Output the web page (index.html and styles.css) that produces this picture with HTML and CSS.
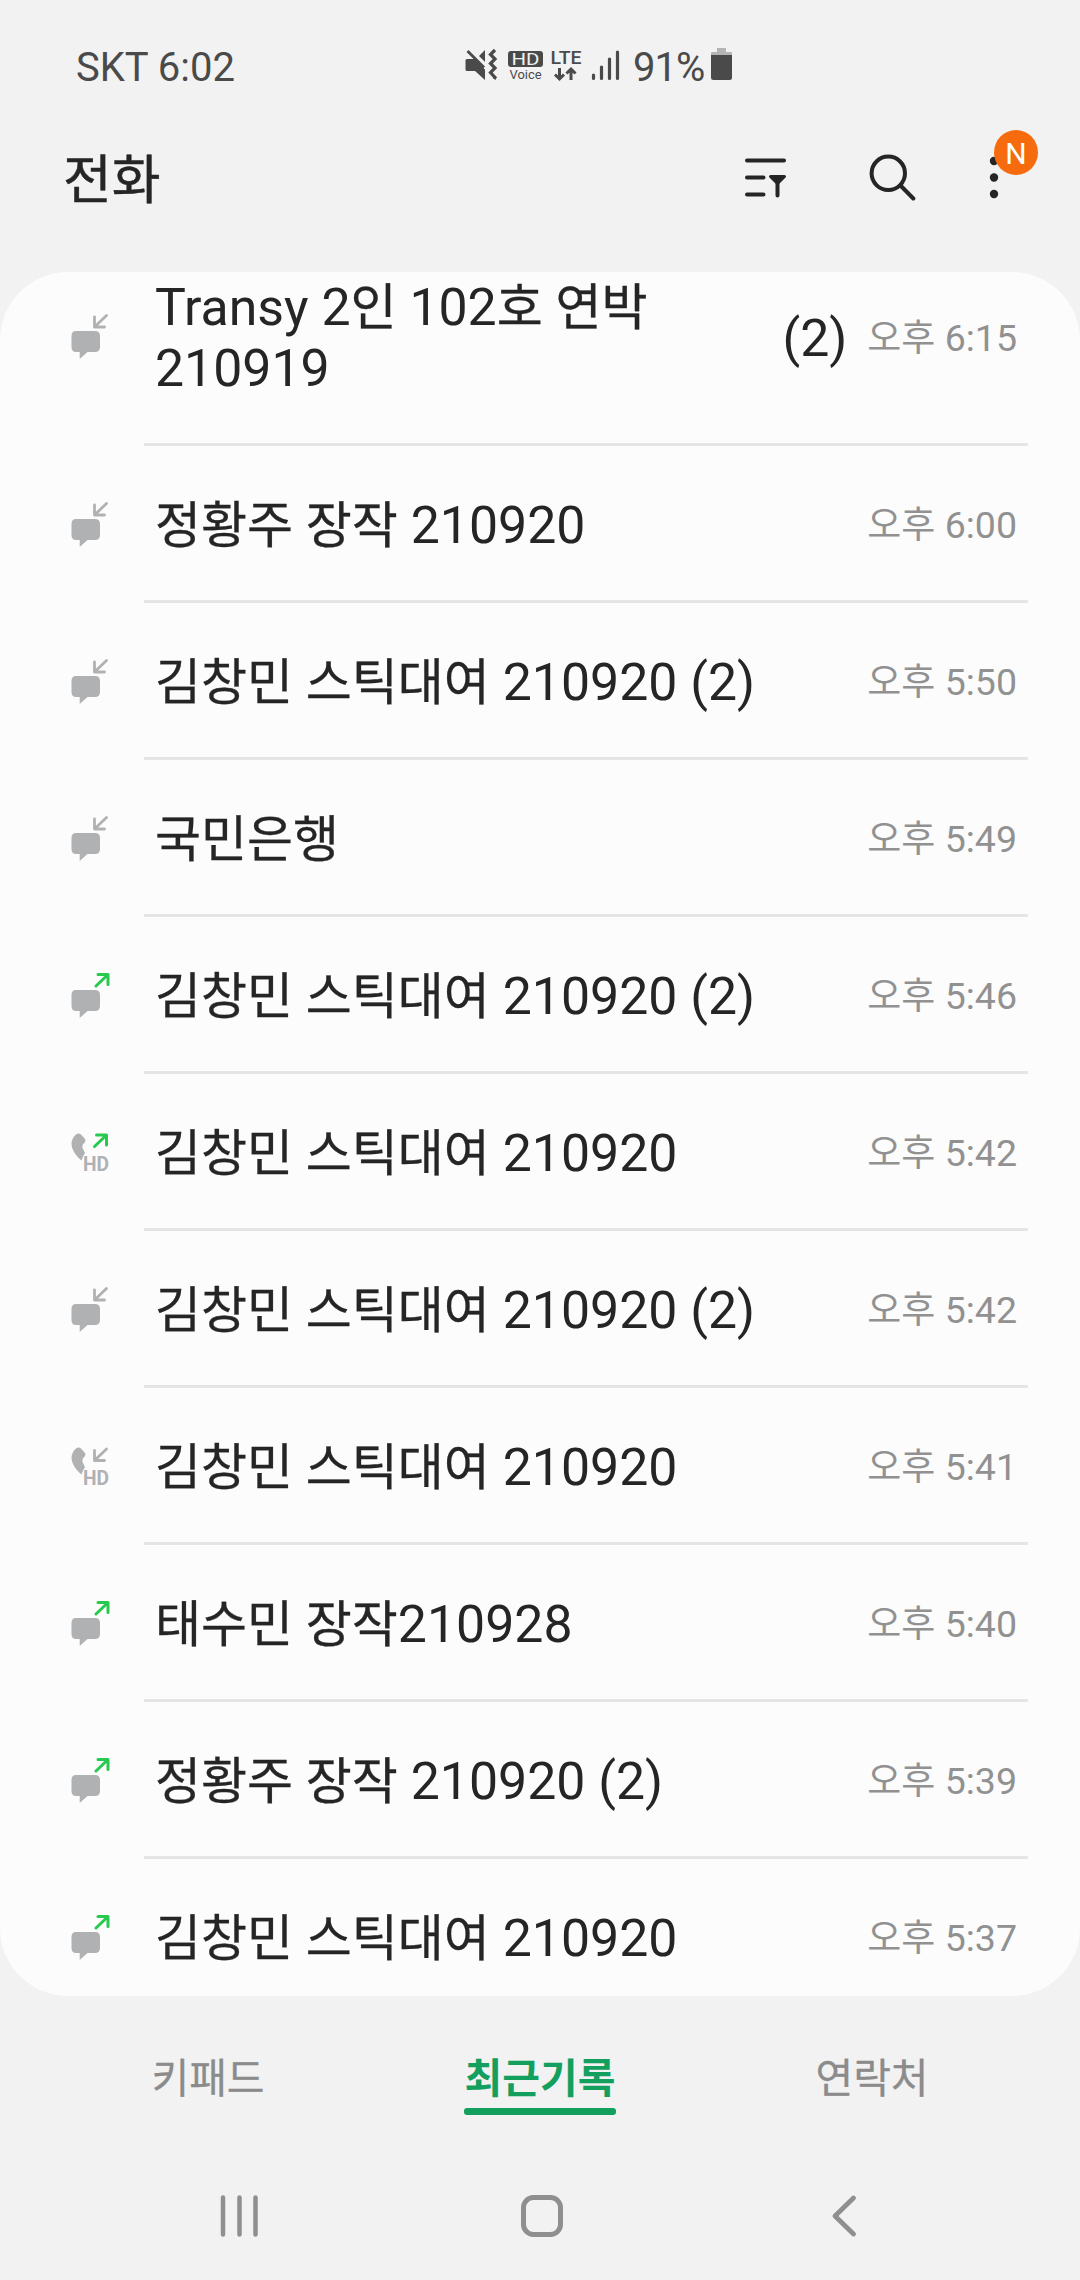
FILE: index.html
```html
<!DOCTYPE html>
<html lang="ko">
<head>
  <meta charset="UTF-8">
  <meta name="viewport" content="width=device-width, initial-scale=1.0">
  <title>전화</title>
  <link rel="stylesheet" href="styles.css">
</head>
<body>

  <svg class="sprite" width="0" height="0">
    <symbol id="arrow-in" viewBox="0 0 16 16">
      <path d="M14 2L2.500 13M2 3.500V13.500H12" fill="none" stroke="#afb1b3" stroke-width="2.800" stroke-linecap="round" stroke-linejoin="round"/>
    </symbol>
    <symbol id="arrow-out" viewBox="0 0 16 16">
      <path d="M2 13.500L13.500 2.500M4 2H14V12" fill="none" stroke="#27c94f" stroke-width="3" stroke-linecap="round" stroke-linejoin="round"/>
    </symbol>
    <symbol id="bubble" viewBox="0 0 30 30">
      <path d="M5 .5H24Q29 .5 29 5.500V16.500Q29 21.500 24 21.500H16.500L8.700 28.500V21.500H5Q.5 21.500 .5 16.500V5.500Q.5 .5 5 .5Z" fill="#afb1b3"/>
    </symbol>
    <symbol id="msg-in" viewBox="0 0 46 48">
      <use href="#bubble" x="3" y="17.500" width="30" height="30"/>
      <use href="#arrow-in" x="24.500" y="0.500" width="16" height="16"/>
    </symbol>
    <symbol id="msg-out" viewBox="0 0 46 48">
      <use href="#bubble" x="3" y="17.500" width="30" height="30"/>
      <use href="#arrow-out" x="26" y="0.500" width="16" height="16"/>
    </symbol>
    <symbol id="handset" viewBox="0 0 46 48">
      <path d="M8 5.500Q10.500 3.500 13 5.500L17 10Q18 11.500 17 13L14.500 16V19L17 24L15 27.500L13.500 31.500C7 26 3.500 20 3.500 14.500Q4 8.500 8 5.500Z" fill="#afb1b3"/>
      <text x="15" y="42" textLength="26" lengthAdjust="spacingAndGlyphs" class="hd-label">HD</text>
    </symbol>
    <symbol id="call-in" viewBox="0 0 46 48">
      <use href="#handset" width="46" height="48"/>
      <use href="#arrow-in" x="24.500" y="4" width="16" height="16"/>
    </symbol>
    <symbol id="call-out" viewBox="0 0 46 48">
      <use href="#handset" width="46" height="48"/>
      <use href="#arrow-out" x="24.500" y="4" width="16" height="16"/>
    </symbol>
  </svg>

  <div class="status-bar">
    <span class="carrier">SKT 6:02</span>
    <svg class="status-icons" width="158" height="36" viewBox="0 0 158 36">
      <!-- mute + vibrate -->
      <path d="M2 12H9.500L20 22.500V33L10 24H2Q.5 24 .5 22.500V13.500Q.5 12 2 12Z" fill="#4a4a4a"/>
      <path d="M20 3V15L14 9Z" fill="#4a4a4a"/>
      <path d="M2.500 4L19 20.500" stroke="#4a4a4a" stroke-width="2.800"/>
      <path d="M30 3L25.500 7.500L30 12L25.500 16.500L30 21L25.500 25.500L30 30.500L29 32" fill="none" stroke="#4a4a4a" stroke-width="3.200"/>
      <!-- HD voice -->
      <rect x="43" y="4" width="35" height="16" rx="3" fill="#4a4a4a"/>
      <text x="60.500" y="17.500" class="hd-badge" textLength="28" lengthAdjust="spacingAndGlyphs">HD</text>
      <text x="60.500" y="32" class="hd-voice" textLength="32" lengthAdjust="spacingAndGlyphs">Voice</text>
      <!-- LTE -->
      <text x="101" y="16.500" class="lte" textLength="31" lengthAdjust="spacingAndGlyphs">LTE</text>
      <path d="M94.500 21V32M90 27.500L94.500 32L99 27.500M106 33V22M101.500 26.500L106 22L110.500 26.500" fill="none" stroke="#4a4a4a" stroke-width="3"/>
      <!-- signal -->
      <path d="M128.500 28V31.500M136.500 20V31.500M144.500 12V31.500M152.500 5V31.500" stroke="#4a4a4a" stroke-width="3.200" stroke-linecap="round"/>
    </svg>
    <span class="percent">91%</span>
    <svg class="battery" width="22" height="34" viewBox="0 0 22 34">
      <path d="M6 1H15V5H20Q21 5 21 6V9H0V6Q0 5 1 5H6Z" fill="#b4b4b4"/>
      <path d="M0 8H21V30.500Q21 33 18.500 33H2.500Q0 33 0 30.500Z" fill="#4a4a4a"/>
    </svg>
  </div>

  <div class="header">
    <h1>전화</h1>
    <div class="actions">
      <svg width="42" height="48" viewBox="0 0 42 48">
        <path d="M2 7.500H39M2 24.500H18.500M2 41.500H18.500M32.500 28V42.500" stroke="#252525" stroke-width="4" stroke-linecap="round"/>
        <path d="M25.500 23.500H39.500L32.500 30.500Z" fill="#252525" stroke="#252525" stroke-width="3" stroke-linejoin="round"/>
      </svg>
      <svg width="48" height="48" viewBox="0 0 48 48">
        <circle cx="19.300" cy="20.300" r="16.700" fill="none" stroke="#252525" stroke-width="4"/>
        <path d="M31.500 32.500L44.300 45.500" stroke="#252525" stroke-width="4" stroke-linecap="round"/>
      </svg>
      <div class="more">
        <svg width="10" height="48" viewBox="0 0 10 48">
          <circle cx="5" cy="8" r="4.200" fill="#252525"/>
          <circle cx="5" cy="24.500" r="4.200" fill="#252525"/>
          <circle cx="5" cy="41" r="4.200" fill="#252525"/>
        </svg>
        <span class="badge">N</span>
      </div>
    </div>
  </div>

  <div class="list">
    <div class="row first">
      <svg class="icon"><use href="#msg-in"/></svg>
      <div class="entry">
        <span class="name">Transy 2<b>인</b> 102<b>호</b> <b>연박</b> 210919</span>
        <span class="count">(2)</span>
        <span class="time"><b>오후</b> 6:15</span>
      </div>
    </div>
    <div class="row">
      <svg class="icon"><use href="#msg-in"/></svg>
      <div class="entry">
        <span class="name"><b>정황주</b> <b>장작</b> 210920</span>
        <span class="time"><b>오후</b> 6:00</span>
      </div>
    </div>
    <div class="row">
      <svg class="icon"><use href="#msg-in"/></svg>
      <div class="entry">
        <span class="name"><b>김창민</b> <b>스틱대여</b> 210920 (2)</span>
        <span class="time"><b>오후</b> 5:50</span>
      </div>
    </div>
    <div class="row">
      <svg class="icon"><use href="#msg-in"/></svg>
      <div class="entry">
        <span class="name"><b>국민은행</b></span>
        <span class="time"><b>오후</b> 5:49</span>
      </div>
    </div>
    <div class="row">
      <svg class="icon"><use href="#msg-out"/></svg>
      <div class="entry">
        <span class="name"><b>김창민</b> <b>스틱대여</b> 210920 (2)</span>
        <span class="time"><b>오후</b> 5:46</span>
      </div>
    </div>
    <div class="row">
      <svg class="icon"><use href="#call-out"/></svg>
      <div class="entry">
        <span class="name"><b>김창민</b> <b>스틱대여</b> 210920</span>
        <span class="time"><b>오후</b> 5:42</span>
      </div>
    </div>
    <div class="row">
      <svg class="icon"><use href="#msg-in"/></svg>
      <div class="entry">
        <span class="name"><b>김창민</b> <b>스틱대여</b> 210920 (2)</span>
        <span class="time"><b>오후</b> 5:42</span>
      </div>
    </div>
    <div class="row">
      <svg class="icon"><use href="#call-in"/></svg>
      <div class="entry">
        <span class="name"><b>김창민</b> <b>스틱대여</b> 210920</span>
        <span class="time"><b>오후</b> 5:41</span>
      </div>
    </div>
    <div class="row">
      <svg class="icon"><use href="#msg-out"/></svg>
      <div class="entry">
        <span class="name"><b>태수민</b> <b>장작</b>210928</span>
        <span class="time"><b>오후</b> 5:40</span>
      </div>
    </div>
    <div class="row">
      <svg class="icon"><use href="#msg-out"/></svg>
      <div class="entry">
        <span class="name"><b>정황주</b> <b>장작</b> 210920 (2)</span>
        <span class="time"><b>오후</b> 5:39</span>
      </div>
    </div>
    <div class="row">
      <svg class="icon"><use href="#msg-out"/></svg>
      <div class="entry">
        <span class="name"><b>김창민</b> <b>스틱대여</b> 210920</span>
        <span class="time"><b>오후</b> 5:37</span>
      </div>
    </div>
  </div>

  <div class="tabs">
    <div class="tab"><span>키패드</span></div>
    <div class="tab active"><span>최근기록</span></div>
    <div class="tab"><span>연락처</span></div>
  </div>

  <div class="nav-bar">
    <svg width="44" height="44" viewBox="0 0 44 44">
      <path d="M5 3.500V40.500M21.500 3.500V40.500M37.500 3.500V40.500" stroke="#8f8f8f" stroke-width="4.500" stroke-linecap="round"/>
    </svg>
    <svg width="44" height="44" viewBox="0 0 44 44">
      <rect x="3.500" y="3.500" width="37" height="37" rx="10" fill="none" stroke="#8f8f8f" stroke-width="5"/>
    </svg>
    <svg width="44" height="44" viewBox="0 0 44 44">
      <path d="M31.500 4L13 22L31.500 40" fill="none" stroke="#8f8f8f" stroke-width="4.800" stroke-linecap="round" stroke-linejoin="round"/>
    </svg>
  </div>

</body>
</html>
```
FILE: styles.css
```css
body {
  font-family: Roboto, 'Noto Sans CJK KR', sans-serif;
  background-color: #f2f2f2;
  color: #252525;
  margin: 0;
  width: 1080px;
  height: 2280px;
  overflow: hidden;
  display: flex;
  flex-direction: column;
}

svg {
  display: block;
  flex: none;
}

.sprite {
  display: none;
}

/* status bar */
.status-bar {
  height: 132px;
  box-sizing: border-box;
  padding: 46px 0 0 76px;
  display: flex;
  align-items: flex-start;
  color: #4a4a4a;
  font-size: 40px;
  line-height: 43px;
}

.carrier {
  width: 389px;
}

.status-icons, .battery {
  margin-top: 1px;
}

.percent {
  width: 77px;
  padding-left: 10px;
  letter-spacing: -1px;
  margin-right: 1px;
}

.hd-badge, .hd-voice, .lte {
  font-family: Roboto, sans-serif;
  text-anchor: middle;
  fill: #4a4a4a;
}

.hd-badge {
  font-size: 16px;
  fill: #f1f1f1;
}

.hd-voice {
  font-size: 13px;
}

.lte {
  font-size: 19px;
  font-weight: 500;
}

/* header */
.header {
  height: 140px;
  box-sizing: border-box;
  padding: 21px 81px 0 63px;
  display: flex;
  justify-content: space-between;
  align-items: flex-start;
}

h1 {
  font-size: 53px;
  font-weight: 400;
  line-height: 57px;
  margin: 0;
  -webkit-text-stroke: 0.5px #252525;
}

.actions {
  display: flex;
}

.actions > svg:nth-child(2) {
  margin-left: 82px;
}

.more {
  position: relative;
  margin-left: 72px;
}

.badge {
  position: absolute;
  left: 5px;
  top: -23px;
  width: 44px;
  height: 45px;
  border-radius: 50%;
  background-color: #f76b0f;
  color: #fff;
  font-size: 30px;
  line-height: 48px;
  text-align: center;
}

/* call log */
.list {
  background-color: #fcfcfc;
  height: 1724px;
  border-radius: 68px;
  overflow: hidden;
}

.row {
  height: 157px;
  display: flex;
  align-items: center;
  padding: 0 52px 0 68px;
}

.row.first {
  height: 213px;
  margin-top: -39px;
}

.icon {
  width: 46px;
  height: 48px;
  margin-right: 30px;
}

.first .icon {
  margin-bottom: 6px;
}

.hd-label {
  font-family: Roboto, sans-serif;
  font-size: 20px;
  font-weight: 700;
  fill: #afb1b3;
}

.entry {
  flex: 1;
  height: 100%;
  box-sizing: border-box;
  border-bottom: 3px solid #e5e5e5;
  padding: 4px 11px 0;
  display: flex;
  align-items: center;
}

.first .entry {
  padding-top: 0;
}

.name, .count {
  font-size: 51.8px;
  line-height: 61px;
}

.name {
  flex: 1;
}

.count {
  margin-right: 20px;
}

.first .name {
  max-width: 520px;
  margin-right: auto;
}

/* hangul sits a bit smaller and lower than the digits */
.name b, .time b {
  font-family: 'Noto Sans CJK KR', sans-serif;
  font-weight: 400;
  line-height: 1px;
}

.name b {
  font-size: 50px;
  -webkit-text-stroke: 0.3px #252525;
}

.time {
  color: #919191;
  font-size: 37.5px;
  line-height: 44px;
}

.time b {
  font-size: 37px;
}

/* bottom tabs */
.tabs {
  height: 164px;
  display: flex;
  padding: 0 42px;
  font-size: 41px;
  line-height: 52px;
  color: #8b8b8b;
}

.tab {
  flex: 1;
  display: flex;
  flex-direction: column;
  align-items: center;
  padding-top: 57px;
}

.tab span {
  -webkit-text-stroke: 0.3px;
}

.tab.active {
  color: #13a05f;
  font-weight: bold;
}

.tab.active span {
  -webkit-text-stroke: 0;
}

.tab.active::after {
  content: "";
  width: 152px;
  height: 7px;
  margin-top: 3px;
  border-radius: 3px;
  background-color: #13a05f;
}

/* navigation bar */
.nav-bar {
  display: flex;
  justify-content: space-between;
  padding: 34px 214px 0 218px;
}
```
